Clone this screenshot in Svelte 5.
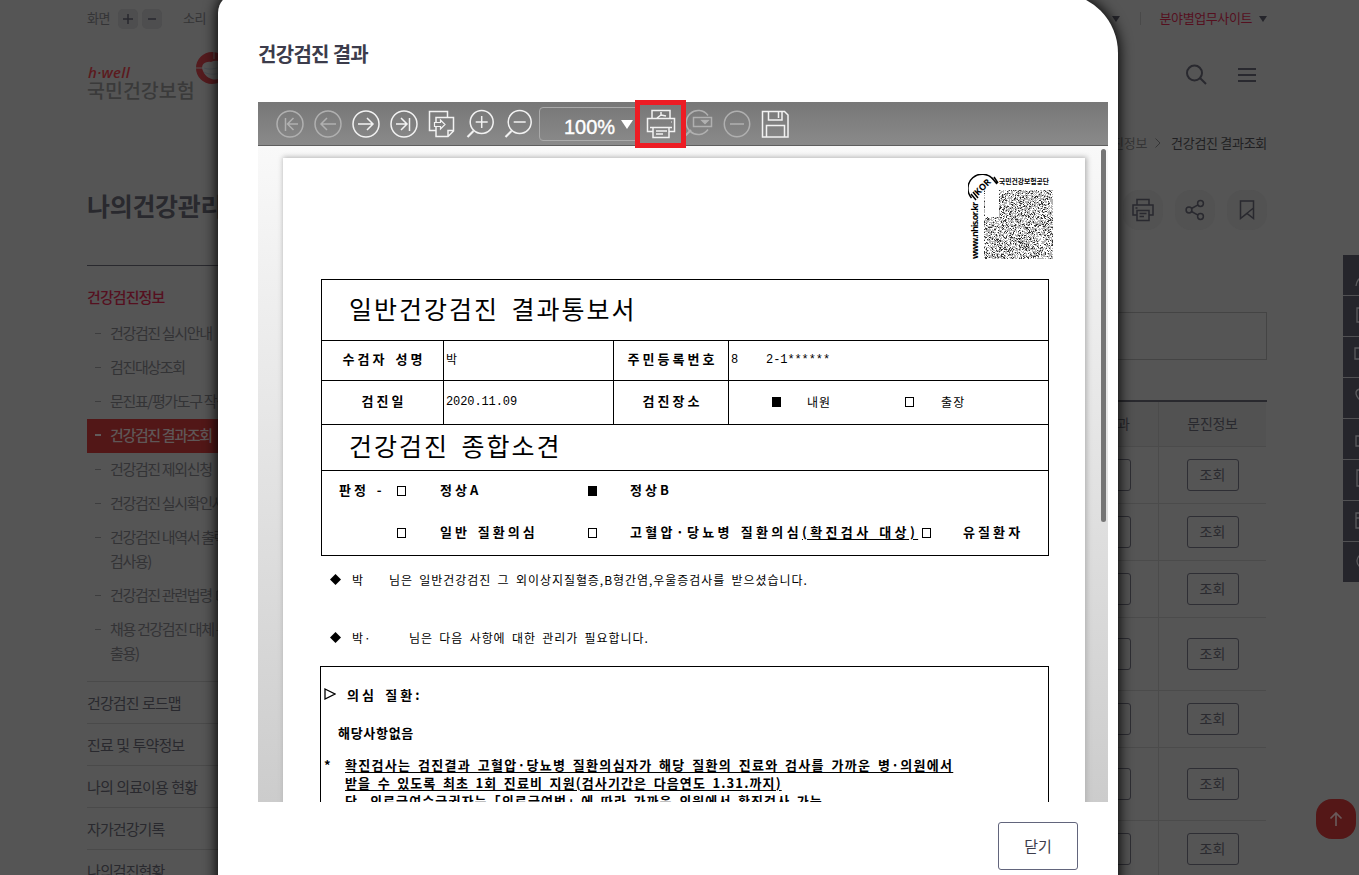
<script>
    const subMenu = [
        {label: "건강검진 실시안내"},
        {label: "검진대상조회"},
        {label: "문진표/평가도구 작성"},
        {label: "건강검진 결과조회", active: true},
        {label: "건강검진 제외신청"},
        {label: "건강검진 실시확인서"},
        {label: "건강검진 내역서 출력(채용", second: "검사용)"},
        {label: "건강검진 관련법령", popup: true},
        {label: "채용 건강검진 대체 통보서", second: "출용)"},
    ];
    const menu = ["건강검진 로드맵", "진료 및 투약정보", "나의 의료이용 현황", "자가건강기록", "나의검진현황"];
    const rows = [57, 57, 57, 73, 57, 73, 57];

    const quick = [
        "M8 13a4 4 0 1 1 8 0M3 25c1-6 4-9 8-9M15 16c4 1 6 4 7 8",
        "M4 6h15v14H4zM8 10h8M8 14h8",
        "M2 5h18v11H2zM6 19h11",
        "M12 20C6 16 3 13 3 9s6-6 9-1c3-5 9-3 9 1s-3 7-9 11z",
        "M3 11h18v10H3zM7 11V7a5 5 0 0 1 10 0",
        "M4 4h15v16H4zM8 9h8M8 13h8",
        "M3 6h18v15H3zM3 11h18M7 3v5M17 3v5",
        "M8 20l-1 4M7 19a9 8 0 1 1 5 2",
    ];

    // two dimensional code printed on the seal, one rect per dark module
    function makeCode(size) {
        let seed = 7919;
        let dark = "";
        let soft = "";
        for (let y = 0; y < size; y++) {
            for (let x = 0; x < size; x++) {
                seed = (seed * 1103515245 + 12345) % 2147483648;
                const v = seed / 2147483648;
                if (x < 15 && y < 27 && x > 0) continue;
                if (v < 0.16) dark += `M${x} ${y}h1v1h-1z`;
                else if (v < 0.62) soft += `M${x} ${y}h1v1h-1z`;
            }
        }
        return {dark, soft};
    }

    const code = makeCode(69);
</script>

<div class="screen">
    <div class="page">
        <div class="topbar">
            <div class="zoom">
                <span>화면</span>
                <i><svg width="20" height="20"><path d="M10 5v10M5 10h10"/></svg></i>
                <i><svg width="20" height="20"><path d="M6 10h8"/></svg></i>
                <span class="sound">소리</span>
            </div>
            <div class="sites">
                <b class="arrow"></b>
                <span class="bar"></span>
                <span class="red">분야별업무사이트</span>
                <b class="arrow"></b>
            </div>
        </div>

        <header>
            <div class="logo">
                <div>
                    <em>h·well</em>
                    <strong>국민건강보험</strong>
                </div>
                <svg width="34" height="36" viewBox="0 0 34 36">
                    <path d="M17 1a16 16 0 1 0 0 32 18 18 0 0 0 8-2V3a16 16 0 0 0-8-2z" fill="#541b1e" stroke="none"/>
                    <path d="M1 17h7M19 1v7" stroke="#555" stroke-width="1"/>
                    <path d="M8 20c-3-6 2-10 8-9 6-3 12 0 12 5v8c-3 7-16 6-20-4z" fill="#565656" stroke="none"/>
                    <path d="M9 17c5 2 12 1 18-2M9 21c5 3 12 3 18 0" stroke="#4a4e53" stroke-width="1"/>
                </svg>
            </div>
            <div class="tools">
                <svg width="22" height="22" viewBox="0 0 22 22"><circle cx="9.500" cy="9" r="7.500"/><path d="M15 14l6 6"/></svg>
                <svg width="22" height="22" viewBox="0 0 22 22"><path d="M2 5h18M2 11h18M2 17h18"/></svg>
            </div>
        </header>

        <div class="body">
            <aside>
                <h2>나의건강관리</h2>
                <h3>건강검진정보</h3>
                <ul class="sub">
                    {#each subMenu as item}
                        <li class:active={item.active}>
                            {item.label}
                            {#if item.popup}<svg width="9" height="11"><path d="M1 1h8M1 1v9h8"/></svg>{/if}
                            {#if item.second}<br>{item.second}{/if}
                        </li>
                    {/each}
                </ul>
                <ul class="menu">
                    {#each menu as item}
                        <li>{item}</li>
                    {/each}
                </ul>
            </aside>

            <main>
                <div class="crumbs">
                    <span>건강검진정보</span>
                    <svg width="8" height="12"><path d="M1.500 1.500L6 6l-4.500 4.500"/></svg>
                    <b>건강검진 결과조회</b>
                </div>
                <div class="actions">
                    <i><svg width="24" height="24" viewBox="0 0 24 24"><path d="M6 7V1.500h12V7M6 17H2V7h20v10h-4M6 12.500h12v10H6zM8.500 15.500h7M8.500 18.500h4.500M4.500 10h2"/></svg></i>
                    <i><svg width="24" height="24" viewBox="0 0 24 24"><circle cx="6" cy="12" r="2.900"/><circle cx="17.500" cy="5.500" r="2.900"/><circle cx="17.500" cy="18.500" r="2.900"/><path d="M8.500 10.500l6.500-3.700M8.500 13.500l6.500 3.700"/></svg></i>
                    <i><svg width="24" height="24" viewBox="0 0 24 24"><path d="M5.500 3h13v17.500l-6.500-5-6.500 5zM18.500 10L6 20"/></svg></i>
                </div>
                <div class="notice"></div>
                <div class="results">
                    <div class="row head"><span>검진결과</span><span>문진정보</span></div>
                    {#each rows as height}
                        <div class="row" style="height: {height}px">
                            <span><button>조회</button></span>
                            <span><button>조회</button></span>
                        </div>
                    {/each}
                </div>
            </main>
        </div>

        <nav class="quick">
            {#each quick as d}
                <div><svg width="24" height="26" viewBox="0 0 24 26"><path {d}/></svg></div>
            {/each}
        </nav>
        <div class="to-top"><svg width="16" height="16" viewBox="0 0 16 16"><path d="M8 15V2M2.500 7.500L8 2l5.500 5.500"/></svg></div>
    </div>

    <section class="modal">
        <h1>건강검진 결과</h1>
        <div class="viewer">
            <div class="toolbar">
                <span class="off"><svg viewBox="0 0 30 30"><circle cx="15" cy="15" r="13"/><path d="M10.500 9v13M23 15H13M18.500 9l-6 6 6 6"/></svg></span>
                <span class="off"><svg viewBox="0 0 30 30"><circle cx="15" cy="15" r="13"/><path d="M23 15H8M14 9l-6 6 6 6"/></svg></span>
                <span><svg viewBox="0 0 30 30"><circle cx="15" cy="15" r="13"/><path d="M7 15h15M16 9l6 6-6 6"/></svg></span>
                <span><svg viewBox="0 0 30 30"><circle cx="15" cy="15" r="13"/><path d="M7 15h10M12 9l6 6-6 6M20.500 9v13"/></svg></span>
                <span><svg viewBox="0 0 30 30"><path d="M9 21.500H2.500v-19h18V8M9 13V8.500h17.500V22l-5.500 5.500H9V18M21 27v-5.500h5.500"/><path d="M7.500 13.500h6V11l4.500 4.500-4.500 4.500v-2.500h-6z" stroke-width="1.200"/></svg></span>
                <span><svg viewBox="0 0 30 30"><circle cx="16.700" cy="13" r="11.500"/><path d="M16.700 7v12M10.700 13h12"/><path d="M8.500 22l-6 6" stroke-width="2.200"/></svg></span>
                <span><svg viewBox="0 0 30 30"><circle cx="16.700" cy="13" r="11.500"/><path d="M10.700 13h12"/><path d="M8.500 22l-6 6" stroke-width="2.200"/></svg></span>
                <div class="scale"><div>100%<b></b></div></div>
                <span class="print"><svg viewBox="0 0 30 30"><path d="M6 9V1.500h18V9M7 22.500H1.500v-13h27v13H23M7 18.500h16v10H7zM4 18.500h22M10 22h11M10 25h7M15 3v4M15 6l-4 3M15 6l5 1"/><path d="M25 13h.5" stroke-width="2"/></svg></span>
                <span class="off"><svg viewBox="0 0 30 30"><path d="M24 6.500a12 12 0 1 0 0 14"/><path d="M9.500 8.500h18v9h-18z"/><path d="M7 21l-6 6" stroke-width="2"/><path d="M18 11.500h6l-3 3z" fill="#b5b5b5"/></svg></span>
                <span class="off"><svg viewBox="0 0 30 30"><circle cx="15" cy="15" r="12.700"/><path d="M8 15h14"/></svg></span>
                <span><svg viewBox="0 0 30 30"><path d="M2.500 2.500h22l3.500 3.500v22H2.500zM8.500 3v8h13.500V3M6.500 28V16.500h18V28M18.500 3v6"/></svg></span>
            </div>

            <div class="stage">
                <div class="paper">
                    <div class="seal">
                        <svg width="88" height="88" viewBox="0 0 88 88">
                            <path d="M3.500 24A13 13 0 0 1 25 5" fill="none" stroke="#000" stroke-width="1.500"/>
                            <path d="M3 20l5 6M24 4l5 6M5 18l5 6M26 3l4 6" stroke="#000" stroke-width="1.500"/>
                            <text x="10" y="22" font-size="9" font-weight="bold" transform="rotate(-45 10 22)" class="latin">KOR</text>
                            <text x="31" y="10" font-size="6.800" font-weight="bold">국민건강보험공단</text>
                            <text x="10" y="85" font-size="9" font-weight="bold" textLength="57" transform="rotate(-90 10 85)" class="latin">www.nhis.or.kr</text>
                            <g transform="translate(16 16)">
                                <path d={code.soft} fill="#b4b4b4"/>
                                <path d={code.dark} fill="#333"/>
                            </g>
                        </svg>
                    </div>

                    <div class="form">
                        <div class="title first">일반건강검진 결과통보서</div>
                        <div class="line name">
                            <b>수검자 성명</b><span>박</span><b>주민등록번호</b>
                            <span class="mono">8<i></i>2-1******</span>
                        </div>
                        <div class="line date">
                            <b>검진일</b><span class="mono">2020.11.09</span><b>검진장소</b>
                            <span class="place"><i class="box on"></i>내원<i class="box"></i>출장</span>
                        </div>
                        <div class="title">건강검진 종합소견</div>
                        <div class="verdict">
                            <span>판정 -</span><i class="box"></i><span>정상A</span><i class="box on"></i><span>정상B</span><span></span><span></span>
                            <span></span><i class="box"></i><span>일반 질환의심</span><i class="box"></i>
                            <span class="wide">고혈압·당뇨병 질환의심<u>(확진검사 대상)</u></span><i class="box"></i><span>유질환자</span>
                        </div>
                    </div>

                    <p class="note"><svg width="11" height="11"><path d="M5.500 0L11 5.500 5.500 11 0 5.500z"/></svg><span class="who">박</span>님은 일반건강검진 그 외이상지질혈증,B형간염,우울증검사를 받으셨습니다.</p>
                    <p class="note second"><svg width="11" height="11"><path d="M5.500 0L11 5.500 5.500 11 0 5.500z"/></svg><span class="who">박·</span>님은 다음 사항에 대한 관리가 필요합니다.</p>

                    <div class="opinion">
                        <div class="suspect"><svg width="12" height="12"><path d="M1 1l10 5-10 5z"/></svg>의심 질환:</div>
                        <div class="none">해당사항없음</div>
                        <div class="detail">
                            <span>*</span>
                            <div>
                                <u>확진검사는 검진결과 고혈압·당뇨병 질환의심자가 해당 질환의 진료와 검사를 가까운 병·의원에서</u><br>
                                <u class="more">받을 수 있도록 최초 1회 진료비 지원(검사기간은 다음연도 1.31.까지)</u><br>
                                <span class="more">단, 의료급여수급권자는「의료급여법」에 따라 가까운 의원에서 확진검사 가능</span>
                            </div>
                        </div>
                    </div>
                </div>
                <div class="thumb"></div>
            </div>
        </div>
        <div class="foot"><button>닫기</button></div>
    </section>
</div>

<style>
    :global(body) {
        margin: 0;
        overflow: hidden;
    }

    *, *::before, *::after {
        box-sizing: border-box;
    }

    .screen {
        position: relative;
        width: 1359px;
        height: 875px;
        overflow: hidden;
        background: #555;
        font-family: "Noto Sans CJK KR", sans-serif;
        color: #29292e;
    }

    ul, p, h1, h2, h3 {
        margin: 0;
        padding: 0;
        list-style: none;
    }

    svg {
        display: block;
        fill: none;
        stroke: #29292f;
        stroke-width: 2;
    }

    button {
        font-family: inherit;
        background: none;
        padding: 0 0 2px;
    }

    i {
        font-style: normal;
    }

    .page {
        width: 1180px;
        margin-left: 87px;
    }

    .topbar {
        display: flex;
        justify-content: space-between;
        height: 38px;
        padding-top: 9px;
        font-size: 13px;
        line-height: 17px;
        letter-spacing: -0.400px;
    }

    .zoom, .sites {
        display: flex;
        align-items: center;
        height: 19px;
    }

    .zoom span, .red {
        padding-bottom: 2px;
    }

    .zoom i {
        width: 20px;
        height: 20px;
        margin-right: 4px;
        border-radius: 5px;
        background: #4e4e4f;
    }

    .zoom i svg {
        stroke-width: 1.500;
    }

    .zoom span {
        width: 31px;
        color: #343436;
    }

    .zoom .sound {
        margin-left: 17px;
    }

    .arrow {
        border: 4px solid transparent;
        border-top: 6px solid #25252b;
        border-bottom: 0;
    }

    .bar {
        width: 1px;
        height: 13px;
        margin: 0 19px 0 20px;
        background: #494949;
    }

    .red {
        margin-right: 7px;
        color: #55101f;
    }

    header {
        display: flex;
        justify-content: space-between;
        align-items: center;
        height: 74px;
    }

    .logo {
        display: flex;
    }

    .logo div {
        display: flex;
        flex-direction: column;
        width: 108px;
        padding-top: 14px;
    }

    .logo em {
        font: italic 600 15px/15px "Open Sans", sans-serif;
        letter-spacing: 0.300px;
        color: #5c1a1e;
        padding-left: 1px;
    }

    .logo strong {
        font-size: 19.500px;
        font-weight: 500;
        line-height: 19px;
        white-space: nowrap;
        color: #3a3a3a;
    }

    .tools {
        display: flex;
        gap: 29px;
        padding-right: 9px;
    }

    .body {
        display: flex;
        justify-content: space-between;
    }

    aside {
        width: 240px;
    }

    h2 {
        height: 154px;
        padding-top: 73px;
        border-bottom: 1px solid #29292e;
        font-size: 25px;
        line-height: 40px;
        letter-spacing: -0.300px;
    }

    h3 {
        height: 51px;
        padding-top: 19px;
        font-size: 15px;
        font-weight: 500;
        line-height: 24px;
        letter-spacing: -0.900px;
        color: #55101f;
    }

    .sub {
        padding-bottom: 10px;
        border-bottom: 1px solid #4a4a4a;
        font-size: 15px;
        line-height: 24px;
        letter-spacing: -1.350px;
        color: #333335;
    }

    .sub li {
        position: relative;
        padding: 4px 0 6px 23px;
        white-space: nowrap;
    }

    .sub li::before {
        content: "";
        position: absolute;
        left: 8px;
        top: 16px;
        width: 6px;
        height: 1px;
        background: #3d3d3e;
    }

    .sub .active {
        background: #521717;
        color: #5f5757;
        font-weight: 500;
    }

    .sub .active::before {
        top: 15px;
        height: 2px;
        background: #625b5b;
    }

    .sub svg {
        display: inline-block;
        margin-left: 2px;
        stroke-width: 1;
    }

    .menu li {
        height: 42px;
        border-bottom: 1px solid #4a4a4a;
        font-size: 15px;
        line-height: 41px;
        letter-spacing: -0.900px;
        word-spacing: 1px;
    }

    main {
        width: 216px;
        padding-top: 18px;
    }

    .crumbs {
        display: flex;
        justify-content: flex-end;
        align-items: center;
        height: 24px;
        font-size: 13px;
        letter-spacing: -0.300px;
        white-space: nowrap;
        color: #353536;
    }

    .crumbs b {
        font-weight: 400;
        color: #1f1f22;
    }

    .crumbs svg {
        margin: 2px 9px 0 7px;
        stroke-width: 1;
        stroke: #353536;
    }

    .actions {
        display: flex;
        justify-content: flex-end;
        gap: 12px;
        padding-top: 36px;
    }

    .actions i {
        display: grid;
        place-items: center;
        width: 40px;
        height: 40px;
        border-radius: 16px;
        background: #525252;
    }

    .actions svg {
        stroke-width: 1.500;
    }

    .notice {
        height: 48px;
        margin: 82px 0 40px;
        border: 1px solid #444;
    }

    .results {
        border-top: 2px solid #29292e;
    }

    .row {
        display: flex;
        width: 215px;
        border-bottom: 1px solid #4b4b4b;
        font-size: 14px;
        letter-spacing: -0.300px;
    }

    .row.head {
        height: 45px;
        background: #525252;
    }

    .row span {
        flex: 1;
        display: grid;
        place-items: center;
    }

    .row.head span {
        padding-bottom: 3px;
    }

    .row span + span {
        border-left: 1px solid #4b4b4b;
    }

    .row button {
        width: 52px;
        height: 32px;
        border: 1px solid #2e2e34;
        border-radius: 3px;
        font-size: 14px;
        color: #2a2a2f;
    }

    .quick {
        position: absolute;
        left: 1343px;
        top: 255px;
        width: 41px;
        background: #25252b;
    }

    .quick div {
        height: 41px;
        padding: 6px 0 0 10px;
        border-bottom: 1px solid #515153;
    }

    .quick div:last-child {
        height: 40px;
        border: 0;
    }

    .quick svg {
        stroke: #5a5a5d;
        stroke-width: 1.300;
    }

    .to-top {
        position: absolute;
        left: 1316px;
        top: 799px;
        display: grid;
        place-items: center;
        width: 40px;
        height: 40px;
        border-radius: 16px;
        background: #541717;
    }

    .to-top svg {
        stroke: #69595a;
        stroke-width: 1.700;
    }

    .modal {
        position: absolute;
        left: 218px;
        top: -7px;
        width: 900px;
        height: 920px;
        padding: 43px 10px 0 40px;
        border-radius: 20px 60px 0 0;
        background: #fff;
        box-shadow: 0 0 14px 1px #000;
    }

    h1 {
        height: 66px;
        font-size: 20px;
        font-weight: 700;
        line-height: 36px;
        letter-spacing: -0.700px;
        color: #3c3c4b;
    }

    .viewer {
        width: 850px;
        height: 700px;
    }

    .toolbar {
        display: flex;
        align-items: center;
        height: 44px;
        padding-left: 13px;
        background: linear-gradient(#777, #8a8a8a);
        border-bottom: 1px solid #5e5e5e;
    }

    .toolbar span {
        display: grid;
        place-items: center;
        width: 38px;
        height: 44px;
    }

    .toolbar svg {
        width: 30px;
        height: 30px;
        stroke: #f2f2f2;
        stroke-width: 1.500;
    }

    .toolbar .off svg {
        stroke: #b0b0b0;
    }

    .toolbar .print {
        position: relative;
        z-index: 1;
    }

    .toolbar .print::after {
        content: "";
        position: absolute;
        left: -7px;
        top: -2px;
        width: 51px;
        height: 48px;
        border: 5px solid #ed1c24;
    }

    .scale {
        width: 105px;
        padding-left: 2px;
    }

    .scale div {
        display: flex;
        align-items: center;
        gap: 6px;
        width: 100px;
        height: 34px;
        padding: 7px 0 0 24px;
        border: 1px solid #aaa;
        border-radius: 4px;
        font-family: "Liberation Sans", sans-serif;
        font-size: 20px;
        color: #fff;
        -webkit-text-stroke: 0.400px #fff;
    }

    .scale b {
        margin-top: -5px;
        border: 6px solid transparent;
        border-top: 9px solid #fff;
        border-bottom: 0;
    }

    .stage {
        position: relative;
        height: 656px;
        padding: 12px 23px 0 25px;
        overflow: hidden;
        background: linear-gradient(#f9f9f9, #ccc);
    }

    .thumb {
        position: absolute;
        left: 843px;
        top: 3px;
        width: 5px;
        height: 373px;
        border-radius: 3px;
        background: #757575;
    }

    .paper {
        width: 802px;
        height: 1100px;
        padding: 16px 37px 0 38px;
        background: #fff;
        box-shadow: 1px 0 5px 1px #b4b4b4;
        color: #000;
    }

    .seal {
        height: 105px;
        padding-left: 647px;
    }

    .seal svg {
        stroke: none;
        fill: #000;
    }

    .latin {
        font-family: "Open Sans", sans-serif;
    }

    .form {
        width: 728px;
        border: 1px solid #000;
        border-bottom: 0;
    }

    .title {
        height: 46px;
        padding-left: 27px;
        border-bottom: 1px solid #000;
        font-size: 25px;
        line-height: 41px;
        letter-spacing: 2px;
        word-spacing: 5px;
    }

    .title.first {
        height: 61px;
        line-height: 57px;
    }

    .line {
        display: grid;
        grid-template-columns: 121px 170px 115px 1fr;
        height: 40px;
        border-bottom: 1px solid #000;
        line-height: 35px;
        font-size: 12px;
    }

    .line.date {
        height: 44px;
        line-height: 39px;
    }

    .line b {
        font-size: 13px;
        letter-spacing: 3px;
        word-spacing: 2px;
        text-align: center;
        padding-left: 3px;
    }

    .line > * + * {
        border-left: 1px solid #000;
        padding-left: 2px;
    }

    .line .mono {
        padding-top: 2px;
        font-family: "Liberation Mono", monospace;
        letter-spacing: -0.100px;
    }

    .mono i {
        display: inline-block;
        width: 28px;
    }

    .box {
        display: inline-block;
        width: 9px;
        height: 10px;
        border: 1px solid #000;
    }

    .box.on {
        background: #000;
    }

    .place {
        display: flex;
        align-items: center;
        padding-bottom: 2px;
        letter-spacing: 1px;
    }

    .place .box {
        margin: 0 26px 0 41px;
    }

    .place .box + .box {
        margin-left: 74px;
        margin-right: 27px;
    }

    .verdict {
        display: grid;
        grid-template-columns: 58px 43px 148px 42px 292px 41px 1fr;
        grid-template-rows: 40px 44px;
        align-items: center;
        height: 85px;
        padding-left: 17px;
        border-bottom: 1px solid #000;
        font-size: 13px;
        font-weight: 700;
        line-height: 20px;
        letter-spacing: 3.100px;
        word-spacing: 1.500px;
        white-space: nowrap;
    }

    .verdict span {
        padding-bottom: 3px;
    }

    .verdict .wide {
        letter-spacing: 3.350px;
    }

    .verdict u, .detail u {
        text-underline-offset: 2px;
    }

    .note {
        display: flex;
        align-items: center;
        height: 20px;
        margin-top: 13px;
        padding-left: 9px;
        font-size: 12px;
        letter-spacing: 0.950px;
        word-spacing: 2.700px;
    }

    .note svg {
        stroke: none;
        fill: #000;
        margin-right: 11px;
    }

    .note .who {
        width: 37px;
    }

    .note.second {
        margin: 38px 0 19px;
    }

    .note.second .who {
        width: 57px;
    }

    .opinion {
        width: 729px;
        height: 500px;
        margin-left: -1px;
        border: 1px solid #000;
        font-size: 13px;
        font-weight: 700;
        letter-spacing: 1.300px;
        word-spacing: 2.400px;
        white-space: nowrap;
    }

    .suspect {
        display: flex;
        align-items: center;
        height: 20px;
        margin: 17px 0 0 3px;
        letter-spacing: 3px;
    }

    .suspect svg {
        stroke: #000;
        stroke-width: 1.300;
        margin-right: 11px;
    }

    .none {
        padding-left: 17px;
        margin-top: 19px;
        line-height: 20px;
        letter-spacing: 0.700px;
    }

    .detail {
        display: flex;
        margin-top: 13px;
        padding-left: 3px;
        line-height: 18px;
    }

    .detail > span {
        width: 21px;
    }

    .detail .more {
        letter-spacing: 1.120px;
    }

    .foot {
        display: flex;
        justify-content: flex-end;
        padding: 20px 30px 0 0;
    }

    .foot button {
        width: 80px;
        height: 48px;
        border: 1px solid #62657c;
        border-radius: 3px;
        font-size: 15px;
        color: #3c3c4b;
    }
</style>
